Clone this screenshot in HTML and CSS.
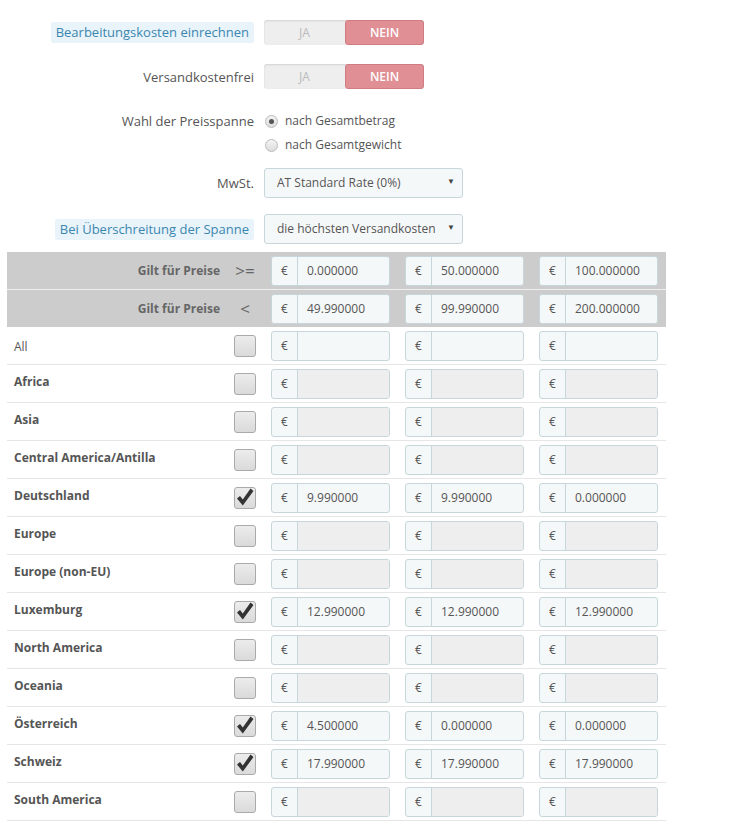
FILE: index.html
```html
<!DOCTYPE html>
<html lang="de">
<head>
    <meta charset="UTF-8">
    <title>Versandkosten</title>
    <link rel="stylesheet" href="styles.css">
</head>
<body>
    <form class="carrier-form">
        <div class="form-row row-toggle-1">
            <div class="form-label"><span class="label-tip">Bearbeitungskosten einrechnen</span></div>
            <div class="switch">
                <span class="switch-off">JA</span>
                <span class="switch-on">NEIN</span>
            </div>
        </div>

        <div class="form-row row-toggle-2">
            <div class="form-label">Versandkostenfrei</div>
            <div class="switch">
                <span class="switch-off">JA</span>
                <span class="switch-on">NEIN</span>
            </div>
        </div>

        <div class="form-row row-radio">
            <div class="form-label">Wahl der Preisspanne</div>
            <div class="radio-list">
                <label class="radio"><span class="radio-dot checked"></span>nach Gesamtbetrag</label>
                <label class="radio"><span class="radio-dot"></span>nach Gesamtgewicht</label>
            </div>
        </div>

        <div class="form-row row-select-1">
            <div class="form-label">MwSt.</div>
            <div class="select">AT Standard Rate (0%)<span class="caret">&#9660;</span></div>
        </div>

        <div class="form-row row-select-2">
            <div class="form-label"><span class="label-tip">Bei Überschreitung der Spanne</span></div>
            <div class="select">die höchsten Versandkosten<span class="caret">&#9660;</span></div>
        </div>
    </form>

    <div class="ranges" id="ranges">
        <div class="range-row head">
            <div class="cell name head-label">Gilt für Preise</div>
            <div class="cell check op">&gt;=</div>
            <div class="cell"><div class="input-group"><span class="addon">€</span><span class="field">0.000000</span></div></div>
            <div class="cell"><div class="input-group"><span class="addon">€</span><span class="field">50.000000</span></div></div>
            <div class="cell"><div class="input-group"><span class="addon">€</span><span class="field">100.000000</span></div></div>
        </div>
        <div class="range-row head">
            <div class="cell name head-label">Gilt für Preise</div>
            <div class="cell check op">&lt;</div>
            <div class="cell"><div class="input-group"><span class="addon">€</span><span class="field">49.990000</span></div></div>
            <div class="cell"><div class="input-group"><span class="addon">€</span><span class="field">99.990000</span></div></div>
            <div class="cell"><div class="input-group"><span class="addon">€</span><span class="field">200.000000</span></div></div>
        </div>
    </div>

    <script>
        // Zonen und Preise pro Spanne
        var zones = [
            { name: 'All', all: true, checked: false, prices: ['', '', ''] },
            { name: 'Africa', checked: false, prices: null },
            { name: 'Asia', checked: false, prices: null },
            { name: 'Central America/Antilla', checked: false, prices: null },
            { name: 'Deutschland', checked: true, prices: ['9.990000', '9.990000', '0.000000'] },
            { name: 'Europe', checked: false, prices: null },
            { name: 'Europe (non-EU)', checked: false, prices: null },
            { name: 'Luxemburg', checked: true, prices: ['12.990000', '12.990000', '12.990000'] },
            { name: 'North America', checked: false, prices: null },
            { name: 'Oceania', checked: false, prices: null },
            { name: 'Österreich', checked: true, prices: ['4.500000', '0.000000', '0.000000'] },
            { name: 'Schweiz', checked: true, prices: ['17.990000', '17.990000', '17.990000'] },
            { name: 'South America', checked: false, prices: null }
        ];

        var check = '<svg viewBox="0 0 22 22" width="22" height="22"><path d="M3 11.5 L6 9 L8.8 12.5 L16.5 1.5 L19.5 4 L8.8 18.5 Z" fill="#333"/></svg>';

        var table = document.getElementById('ranges');
        zones.forEach(function (zone) {
            var row = document.createElement('div');
            row.className = 'range-row zone';
            var html = '<div class="cell name' + (zone.all ? ' all' : '') + '">' + zone.name + '</div>';
            html += '<div class="cell check"><span class="checkbox">' + (zone.checked ? check : '') + '</span></div>';
            for (var i = 0; i < 3; i++) {
                var value = zone.prices ? zone.prices[i] : '';
                html += '<div class="cell"><div class="input-group' + (zone.prices ? '' : ' disabled') + '">' +
                    '<span class="addon">€</span><span class="field">' + value + '</span></div></div>';
            }
            row.innerHTML = html;
            table.appendChild(row);
        });
    </script>
</body>
</html>
```

FILE: styles.css
```css
body {
    margin: 0;
    padding: 20px 0 0 7px;
    font-family: "Open Sans", "Liberation Sans", sans-serif;
    font-size: 13px;
    color: #555;
    background-color: white;
}
.form-row {
    display: flex;
    align-items: center;
}
.form-label {
    width: 257px;
    text-align: right;
    padding-right: 10px;
    box-sizing: border-box;
    flex-shrink: 0;
}
.label-tip {
    display: inline-block;
    background-color: #e9f4fa;
    color: #3a86b0;
    padding: 1px 5px 2px;
    border-radius: 2px;
    line-height: 18px;
}
.row-toggle-1 {
    margin-bottom: 19px;
}
.row-toggle-2 {
    margin-bottom: 20px;
}
.row-radio {
    align-items: flex-start;
    margin-bottom: 11px;
    line-height: 24px;
}
.row-select-1 {
    margin-bottom: 16px;
}
.row-select-2 {
    margin-bottom: 8px;
}
.switch {
    display: flex;
    width: 160px;
    height: 25px;
    border-radius: 3px;
    background-color: #eee;
    box-shadow: inset 0 1px 2px rgba(0, 0, 0, 0.12);
    line-height: 25px;
    font-size: 12px;
}
.switch-off {
    width: 81px;
    text-align: center;
    color: #bbb;
}
.switch-on {
    width: 79px;
    box-sizing: border-box;
    text-align: center;
    color: white;
    font-weight: 600;
    background-color: #e08f95;
    border: 1px solid #cf7d83;
    border-radius: 3px;
    line-height: 23px;
}
.radio-list {
    display: flex;
    flex-direction: column;
    font-size: 12px;
}
.radio {
    display: flex;
    align-items: center;
}
.radio-dot {
    width: 11px;
    height: 11px;
    border: 1px solid #bbb;
    border-radius: 50%;
    background: linear-gradient(#f4f4f4, #dcdcdc);
    margin: 0 7px 0 1px;
    position: relative;
}
.radio-dot.checked::after {
    content: "";
    position: absolute;
    left: 3px;
    top: 3px;
    width: 5px;
    height: 5px;
    border-radius: 50%;
    background-color: #555;
}
.select {
    width: 199px;
    height: 30px;
    box-sizing: border-box;
    border: 1px solid #c7d6db;
    border-radius: 3px;
    background-color: #f5f8f9;
    padding: 0 12px;
    line-height: 28px;
    position: relative;
    color: #555;
    font-size: 12px;
}
.caret {
    position: absolute;
    right: 7px;
    top: 0;
    font-size: 8px;
    color: #444;
    line-height: 24px;
}
.ranges {
    width: 659px;
    font-size: 12px;
}
.range-row {
    display: grid;
    grid-template-columns: 219px 38px 134px 134px 134px;
    align-items: start;
}
.range-row.head {
    background-color: #ccc;
    height: 37px;
    align-items: center;
}
.range-row.head + .range-row.head {
    border-top: 1px solid #eee;
}
.range-row.zone {
    height: 37px;
    border-bottom: 1px solid #e6e6e6;
}
.cell {
    box-sizing: border-box;
}
.cell.name {
    padding: 8px 6px 0 7px;
    font-weight: bold;
    line-height: 18px;
}
.cell.name.all {
    font-weight: normal;
    padding-top: 11px;
}
.head-label {
    text-align: right;
    color: #666;
}
.range-row.head .cell.name {
    padding-top: 0;
}
.op {
    text-align: center;
    font-size: 17px;
    color: #666;
}
.cell.check {
    display: flex;
    justify-content: center;
}
.range-row.zone .cell.check {
    padding-top: 8px;
}
.checkbox {
    width: 22px;
    height: 22px;
    box-sizing: border-box;
    border: 1px solid #aaa;
    border-radius: 3px;
    background: linear-gradient(#ececec, #dadada);
    display: block;
    position: relative;
}
.checkbox svg {
    position: absolute;
    left: -1px;
    top: -1px;
}
.input-group {
    display: flex;
    width: 119px;
    height: 30px;
    margin-left: 7px;
    box-sizing: border-box;
    border: 1px solid #c7d6db;
    border-radius: 3px;
    background-color: #f5f8f9;
    line-height: 28px;
}
.range-row.zone .input-group {
    margin-top: 4px;
}
.addon {
    width: 25px;
    flex-shrink: 0;
    text-align: center;
    border-right: 1px solid #c7d6db;
    font-size: 12px;
}
.field {
    padding-left: 9px;
    flex: 1;
}
.input-group.disabled .field {
    background-color: #eee;
    border-radius: 0 2px 2px 0;
}
```
